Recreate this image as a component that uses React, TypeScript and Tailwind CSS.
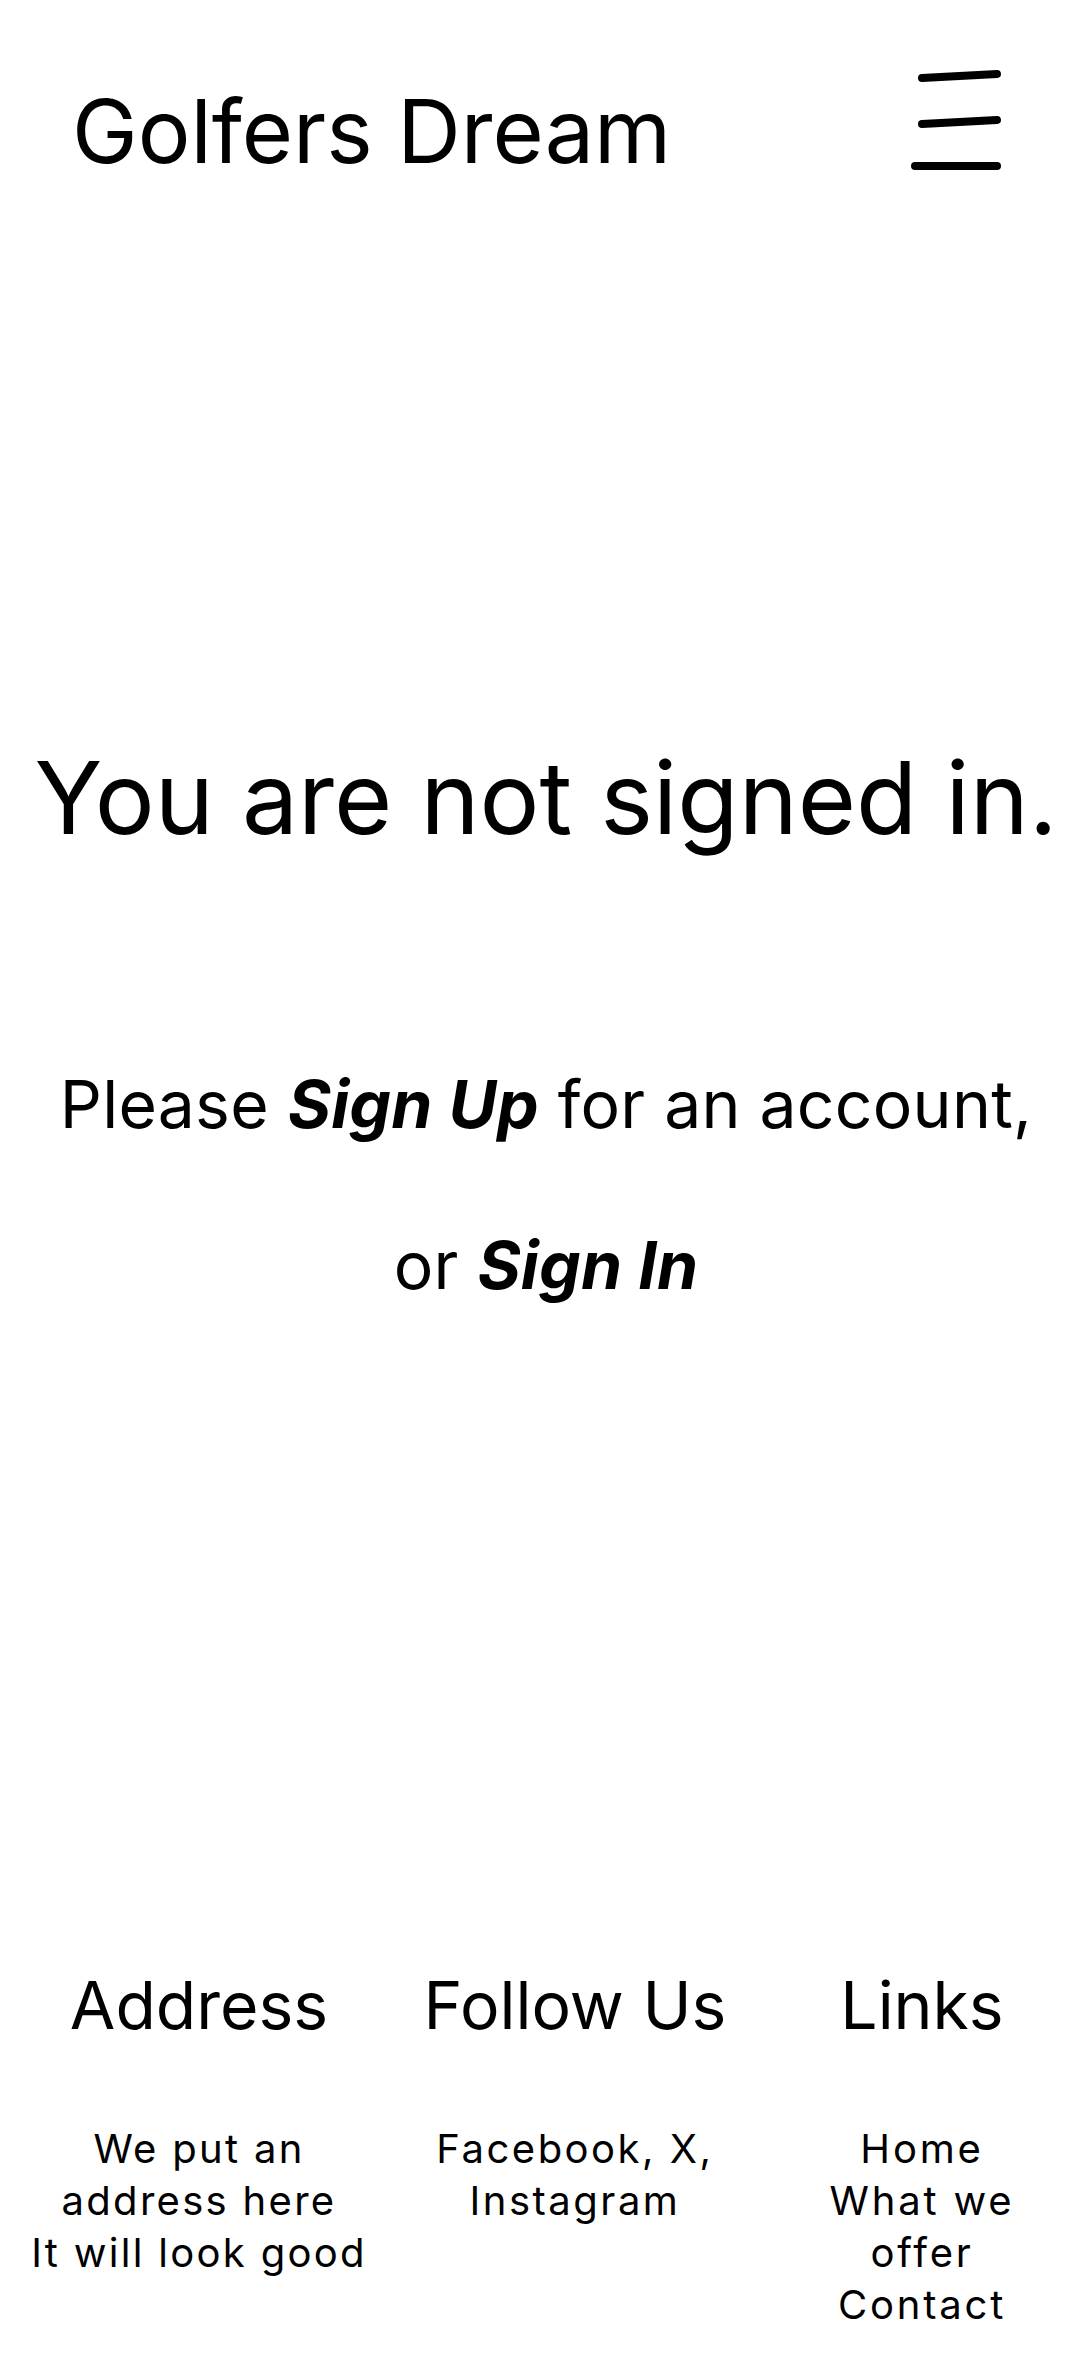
import React from "react";

export default function App() {
  return (
    <div className="min-h-[2367px] bg-white text-black" style={{ fontFamily: "Inter, 'Noto Sans', sans-serif" }}>
      <header className="flex items-start justify-between pl-[72px] pr-[87px]">
        <h1 className="mt-[87px] text-[88px] leading-[88px] font-normal">Golfers Dream</h1>
        <svg className="mt-[65px]" width="100" height="110" viewBox="0 0 100 110" fill="none">
          <path d="M17 13 L92 9" stroke="#000" strokeWidth="8" strokeLinecap="round" />
          <path d="M17 59 L92 55" stroke="#000" strokeWidth="8" strokeLinecap="round" />
          <path d="M10 101 L92 101" stroke="#000" strokeWidth="8" strokeLinecap="round" />
        </svg>
      </header>

      <main className="flex flex-col items-center text-center">
        <h2 className="mt-[573px] text-[100px] leading-[100px] font-normal whitespace-nowrap">You are not signed in.</h2>
        <p className="mt-[223px] text-[66px] leading-[66px] tracking-[0.25px] whitespace-nowrap">
          Please <b className="italic font-bold">Sign Up</b> for an account,
        </p>
        <p className="mt-[95px] text-[66px] leading-[66px] tracking-[0.25px] whitespace-nowrap">
          or <b className="italic font-bold">Sign In</b>
        </p>
      </main>

      <footer className="mt-[674px] flex pl-[24px] text-center">
        <div className="w-[350px]">
          <h3 className="text-[66px] leading-[66px] font-normal whitespace-nowrap">Address</h3>
          <p className="mt-[85px] text-[40px] leading-[52px] tracking-[2.3px]">
            We put an address here
            <br />
            It will look good
          </p>
        </div>
        <div className="ml-[41px] w-[320px]">
          <h3 className="text-[66px] leading-[66px] font-normal whitespace-nowrap">Follow Us</h3>
          <p className="mt-[85px] text-[40px] leading-[52px] tracking-[2.5px]">Facebook, X, Instagram</p>
        </div>
        <div className="ml-[58px] w-[258px]">
          <h3 className="text-[66px] leading-[66px] font-normal whitespace-nowrap">Links</h3>
          <div className="mt-[85px] text-[40px] leading-[52px] tracking-[2.8px]">
            <p>Home</p>
            <p>What we offer</p>
            <p>Contact</p>
          </div>
        </div>
      </footer>
    </div>
  );
}
